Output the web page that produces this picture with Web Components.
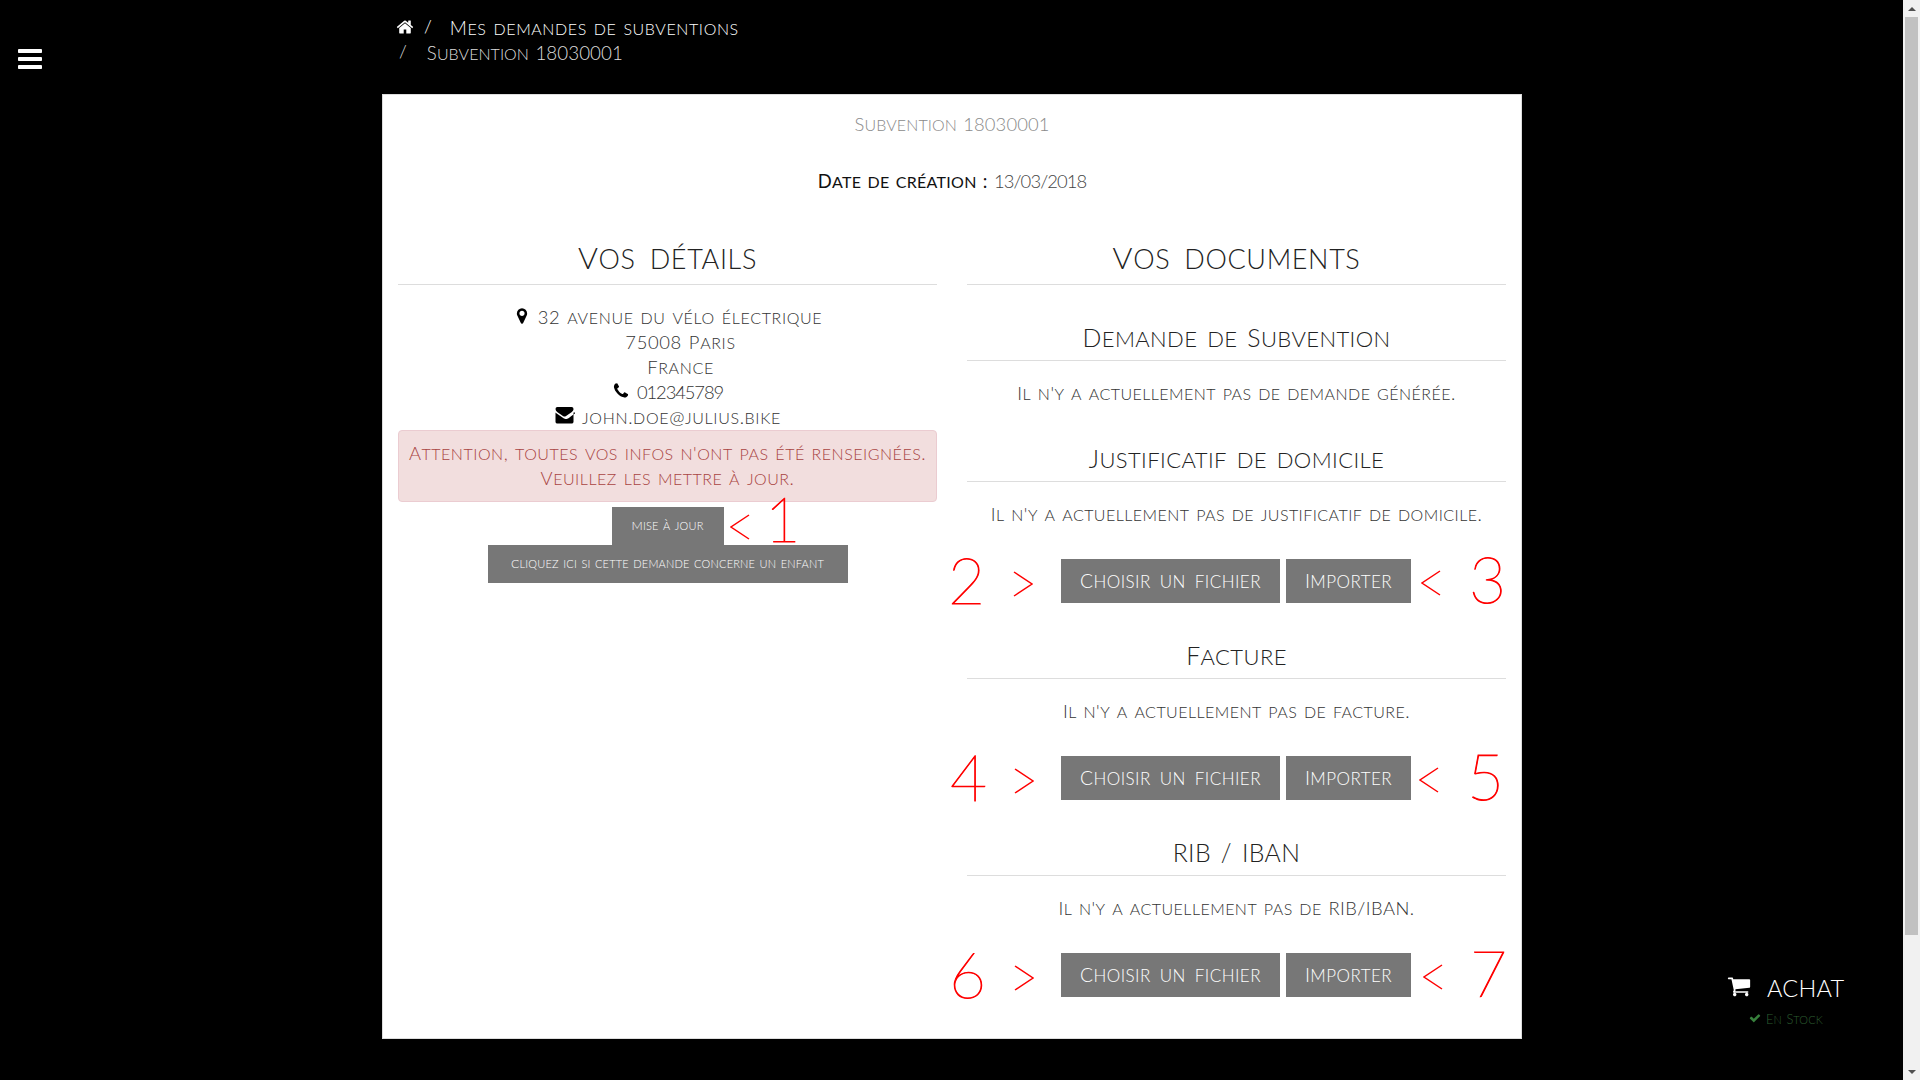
<!DOCTYPE html>
<html lang="fr">
<head>
<meta charset="utf-8">
<title>Subvention 18030001</title>
<style>
html,body{margin:0;padding:0;background:#000;overflow:hidden;height:1080px}
</style>
</head>
<body>
<j-app>
  <j-toggle slot="overlay"></j-toggle>
  <j-buy slot="overlay"></j-buy>
  <j-breadcrumb></j-breadcrumb>
  <j-card>
    <div class="title" slot="title"><j-t>Subvention 18030001</j-t></div>
    <j-date slot="date" label="Date de création :" value="13/03/2018"></j-date>
    <j-column slot="left" heading="Vos détails">
      <j-details></j-details>
    </j-column>
    <j-column slot="right" heading="Vos documents">
      <j-doc heading="Demande de Subvention" text="Il n'y a actuellement pas de demande générée."></j-doc>
      <j-doc heading="Justificatif de domicile" text="Il n'y a actuellement pas de justificatif de domicile." upload="2,3" pos="951,1013,1421,1472"></j-doc>
      <j-doc heading="Facture" text="Il n'y a actuellement pas de facture." upload="4,5" pos="953,1014,1419,1470"></j-doc>
      <j-doc heading="RIB / IBAN" text="Il n'y a actuellement pas de RIB/IBAN." upload="6,7" pos="952,1014,1423,1473"></j-doc>
    </j-column>
  </j-card>
</j-app>
<script>
const ICONS={
 bars:'M1664 1344v128q0 26-19 45t-45 19h-1408q-26 0-45-19t-19-45v-128q0-26 19-45t45-19h1408q26 0 45 19t19 45zm0-512v128q0 26-19 45t-45 19h-1408q-26 0-45-19t-19-45v-128q0-26 19-45t45-19h1408q26 0 45 19t19 45zm0-512v128q0 26-19 45t-45 19h-1408q-26 0-45-19t-19-45v-128q0-26 19-45t45-19h1408q26 0 45 19t19 45z',
 home:'M1472 992v480q0 26-19 45t-45 19h-384v-384h-256v384h-384q-26 0-45-19t-19-45v-480q0-1 .5-3t.5-3l575-474 575 474q1 2 1 6zm223-69l-62 74q-8 9-21 11h-3q-13 0-21-7l-692-577-692 577q-12 8-24 7-13-2-21-11l-62-74q-8-10-7-23.5t11-21.5l719-599q32-26 76-26t76 26l244 204v-195q0-14 9-23t23-9h192q14 0 23 9t9 23v408l219 182q10 8 11 21.5t-7 23.5z',
 marker:'M1152 640q0-106-75-181t-181-75-181 75-75 181 75 181 181 75 181-75 75-181zm256 0q0 109-33 179l-364 774q-16 33-47.5 52t-67.5 19-67.5-19-46.5-52l-365-774q-33-70-33-179 0-212 150-362t362-150 362 150 150 362z',
 phone:'M1600 1240q0 27-10 70.5t-21 68.5q-21 50-122 106-94 51-186 51-27 0-53-3.5t-57.5-12.5-47-14.5-55.5-20.5-49-18q-98-35-175-83-127-79-264-216t-216-264q-48-77-83-175-3-9-18-49t-20.5-55.5-14.5-47-12.5-57.5-3.5-53q0-92 51-186 56-101 106-122 25-11 68.5-21t70.5-10q14 0 21 3 18 6 53 76 11 19 30 54t35 63.5 31 53.5q3 4 17.5 25t21.5 35.5 7 28.5q0 20-28.5 50t-62 55-62 53-28.5 46q0 9 5 22.5t8.5 20.5 14 24 11.5 19q76 137 174 235t235 174q2 1 19 11.5t24 14 20.5 8.5 22.5 5q18 0 46-28.5t53-62 55-62 50-28.5q14 0 28.5 7t35.5 21.5 25 17.5q25 15 53.5 31t63.5 35 54 30q70 35 76 53 3 7 3 21z',
 mail:'M1664 630v794q0 66-47 113t-113 47h-1216q-66 0-113-47t-47-113v-794q44 49 101 87 362 246 497 345 57 42 92.5 65.5t94.5 48 110 24.5h2q51 0 110-24.5t94.5-48 92.5-65.5q170-123 498-345 57-39 100-87zM1664 336q0 79-49 151t-122 123L1030 930Q945 990 896 990Q847 990 762 930L299 610Q128 490 128 336Q128 176 288 176H1504Q1664 176 1664 336z',
 cart:'M704 1536q0 52-38 90t-90 38-90-38-38-90 38-90 90-38 90 38 38 90zm896 0q0 52-38 90t-90 38-90-38-38-90 38-90 90-38 90 38 38 90zm128-1088v512q0 24-16.5 42.5t-40.5 21.5l-1044 122q13 60 13 70 0 16-24 64h920q26 0 45 19t19 45-19 45-45 19h-1024q-26 0-45-19t-19-45q0-11 8-31.5t16-36 21.5-40 15.5-29.5l-177-823h-204q-26 0-45-19t-19-45 19-45 45-19h256q16 0 28.5 6.5t19.5 15.5 13 24.5 8 26 5.5 29.5 4.5 26h1201q26 0 45 19t19 45z',
 check:'M1671 566q0 40-28 68l-724 724-136 136q-28 28-68 28t-68-28l-136-136-362-362q-28-28-28-68t28-68l136-136q28-28 68-28t68 28l294 295 656-657q28-28 68-28t68 28l136 136q28 28 28 68z'
};
const icon=(n,w,h,c='currentColor',extra='')=>`<svg width="${w}" height="${h}" viewBox="0 0 1792 1792" preserveAspectRatio="xMidYMid meet" style="flex:none;${extra}" aria-hidden="true"><path fill="${c}" d="${ICONS[n]}"/></svg>`;
const esc=s=>s.replace(/&/g,'&amp;').replace(/</g,'&lt;');

function make(name,css,html,after){
  customElements.define(name,class extends HTMLElement{
    constructor(){super();this.attachShadow({mode:'open'});}
    connectedCallback(){
      if(this.shadowRoot.firstChild)return;
      const a=n=>this.getAttribute(n)||'';
      this.shadowRoot.innerHTML=`<style>${css}</style>`+html(a);
      if(after)after(this,a);
    }
  });
}

/* Small-caps text: capitals and digits sized down so they stand just above the lowercase. */
customElements.define('j-t',class extends HTMLElement{
  constructor(){super();this.attachShadow({mode:'open'});}
  connectedCallback(){
    if(this.shadowRoot.firstChild)return;
    const s=this.textContent;this.textContent='';
    this.shadowRoot.innerHTML=`<style>:host{display:inline;font-variant-caps:small-caps}.u{font-size:.8em;line-height:0}</style>`+
      esc(s).replace(/[^a-zà-ÿ ]+/g,m=>`<span class="u">${m}</span>`);
  }
});

make('j-app',`
  :host{display:flex;width:1920px;height:1080px;background:#000;color:#333;font-family:Lato,"Open Sans",sans-serif;font-weight:300;overflow:hidden}
  main{flex:1;position:relative;min-width:0;display:flex;flex-direction:column;align-items:center}
  .wrap{width:1140px;margin-left:1px;display:flex;flex-direction:column}
`,()=>`<main><slot name="overlay"></slot><div class="wrap"><slot></slot></div></main><j-scrollbar></j-scrollbar>`);

make('j-scrollbar',`
  :host{display:flex;flex-direction:column;width:17px;height:1080px;background:#f1f1f1;flex:none;position:relative}
  .up,.down{height:17px;display:flex;align-items:center;justify-content:center}
  .up i{border:solid transparent;border-width:0 4px 4px;border-bottom-color:#505050}
  .down i{border:solid transparent;border-width:4px 4px 0;border-top-color:#505050}
  .track{flex:1;padding:0 2px}
  .thumb{height:918px;background:#c1c1c1}
`,()=>`<div class="up"><i></i></div><div class="track"><div class="thumb"></div></div><div class="down"><i></i></div>`);

make('j-toggle',`
  :host{position:absolute;left:16px;top:45px;width:28px;height:28px;display:block;color:#fff}
`,()=>icon('bars',28,28,'#fff','display:block'));

make('j-buy',`
  :host{position:absolute;left:1727px;top:971px;display:block;width:120px;color:#fff}
  .top{display:flex;align-items:center;height:30px}
  .a{font-size:29.5px;margin-left:16px;letter-spacing:.2px;line-height:30px}
  .s{display:flex;align-items:center;margin:10px 0 0 22px;color:#2c5e30;font-size:16px;line-height:14px;letter-spacing:.1px;white-space:nowrap}
  .s svg{margin-right:5px}
`,()=>`<div class="top">${icon('cart',24,24,'#fff')}<span class="a"><j-t>ACHAT</j-t></span></div>
  <div class="s">${icon('check',12,12,'#37803c')}<j-t>En Stock</j-t></div>`);

make('j-breadcrumb',`
  :host{display:block;height:94px;box-sizing:border-box;padding:14px 0 0 14px;color:#fff;font-size:23.5px;line-height:25px;letter-spacing:0;word-spacing:0;white-space:nowrap}
  .l{display:flex;align-items:center;height:25px}
  .sep{font-size:18px;font-weight:300;letter-spacing:0}
  .one .sep{margin:0 0 0 10px}.one .t{margin-left:18px;letter-spacing:.6px}
  .one svg{margin-top:1px}
  .two{color:#ddd}.two .sep{margin-left:3px}.two .t{margin-left:20px;letter-spacing:.05px}
`,()=>`<div class="l one">${icon('home',18,18,'#fff')}<span class="sep">/</span><span class="t"><j-t>Mes demandes de subventions</j-t></span></div>
  <div class="l two"><span class="sep">/</span><span class="t"><j-t>Subvention 18030001</j-t></span></div>`);

make('j-card',`
  :host{display:block;background:#fff;border:1px solid #ddd;border-bottom-color:#ddd;box-sizing:border-box;height:945px;padding:15px 15px 0;text-align:center;font-size:23px;line-height:25px}
  ::slotted(.title){color:#8a8a8a;letter-spacing:.1px;margin-bottom:32px}
  .cols{display:grid;grid-template-columns:539px 539px;column-gap:30px;margin-top:46px}
`,()=>`<slot name="title"></slot><slot name="date"></slot><div class="cols"><slot name="left"></slot><slot name="right"></slot></div>`);

make('j-date',`
  :host{display:block;height:25px;color:#111}
  b{font-weight:400;letter-spacing:.3px}
  span{color:#444;letter-spacing:-.9px}
`,a=>`<b><j-t>${esc(a('label'))}</j-t></b> <span><j-t>${esc(a('value'))}</j-t></span>`);

make('j-column',`
  :host{display:block}
  h2{margin:0;height:33px;padding-bottom:13px;font-size:38px;line-height:33px;font-weight:300;color:#222;letter-spacing:.65px;word-spacing:3px;border-bottom:1px solid #ddd}
`,a=>`<h2><j-t>${esc(a('heading'))}</j-t></h2><slot></slot>`);

make('j-details',`
  :host{display:block;margin-top:18px;color:#333;letter-spacing:.65px}
  .l{height:25px;display:flex;justify-content:center;align-items:center;gap:7px;white-space:nowrap}
  .pad{padding-left:26px}
  .tel{letter-spacing:-1.1px}
  .alert{margin-top:2px;height:72px;box-sizing:border-box;padding:8px 4px;background:#f2dede;border:1px solid #ebccd1;border-radius:4px;color:#a94442;letter-spacing:.52px;white-space:nowrap}
  .acts{position:relative;margin-top:5px;display:flex;flex-direction:column;align-items:center}
`,()=>`<div class="l">${icon('marker',18,18,'#000')}<j-t>32 avenue du vélo électrique</j-t></div>
  <div class="l pad"><j-t>75008 Paris</j-t></div>
  <div class="l pad"><j-t>France</j-t></div>
  <div class="l tel">${icon('phone',18,18,'#000')}<j-t>012345789</j-t></div>
  <div class="l">${icon('mail',21,21,'#000')}<j-t>john.doe@julius.bike</j-t></div>
  <div class="alert"><j-t>Attention, toutes vos infos n'ont pas été renseignées.</j-t><br><j-t>Veuillez les mettre à jour.</j-t></div>
  <div class="acts">
    <j-btn small w="112" label="Mise à jour"></j-btn>
    <j-btn small w="360" label="Cliquez ici si cette demande concerne un enfant"></j-btn>
    <j-chevron x="332" y="7" dir="left"></j-chevron>
    <j-note x="367" y="-19" size="61">1</j-note>
  </div>`);

make('j-btn',`
  :host{display:block;flex:none}
  div{display:flex;align-items:center;justify-content:center;height:44px;box-sizing:border-box;padding:0 0 5px;background:#777;color:#fff;font-size:24px;letter-spacing:.45px;word-spacing:2px;white-space:nowrap}
  :host([small]) div{height:38px;padding-bottom:4px;font-size:15.5px;letter-spacing:.2px;word-spacing:0}
`,a=>`<div style="width:${a('w')}px"><j-t>${esc(a('label'))}</j-t></div>`);

make('j-doc',`
  :host{display:block;margin-top:36px;text-align:center}
  h3{margin:0;height:29px;padding-bottom:10px;font-size:31px;line-height:29px;font-weight:300;color:#222;letter-spacing:.4px;word-spacing:1px;border-bottom:1px solid #ddd}
  p{margin:18px 0 0;height:25px;padding-bottom:2px;line-height:25px;color:#333;letter-spacing:.45px}
  .row{position:relative;margin-top:32px;height:44px;display:flex;justify-content:center;gap:6px;padding-right:1px}
`,a=>{
  let up='';
  if(a('upload')){
    const [n1,n2]=a('upload').split(',');
    const [d1,c1,c2,d2]=a('pos').split(',').map(v=>v-967);
    up=`<div class="row">
      <j-btn label="Choisir un fichier" w="219"></j-btn><j-btn label="Importer" w="125"></j-btn>
      <j-note x="${d1-3}" y="-11" size="64">${n1}</j-note>
      <j-chevron x="${c1}" y="12" dir="right"></j-chevron>
      <j-chevron x="${c2}" y="11" dir="left"></j-chevron>
      <j-note x="${d2-3}" y="-12" size="64">${n2}</j-note>
    </div>`;
  }
  return `<h3><j-t>${esc(a('heading'))}</j-t></h3><p><j-t>${esc(a('text'))}</j-t></p>${up}`;
});

/* Hand-added red annotations that sit over the page. */
make('j-note',`
  :host{position:absolute;display:block;color:#f00;font-family:Lato,sans-serif;font-weight:100;-webkit-text-stroke:.9px #f00;line-height:.72;letter-spacing:0;word-spacing:0}
`,()=>`<slot></slot>`,(el,a)=>{
  const s=+a('size');
  el.style.left=a('x')+'px';el.style.top=(+a('y')+s*.14)+'px';el.style.fontSize=s+'px';
});
make('j-chevron',`
  :host{position:absolute;display:block;width:20px;height:26px}
  svg{display:block}
`,a=>`<svg width="20" height="26" viewBox="0 0 20 26" aria-hidden="true"><polyline points="${a('dir')==='left'?'19,1 1,13 19,25':'1,1 19,13 1,25'}" fill="none" stroke="#f00" stroke-width="1.5"/></svg>`,
(el,a)=>{el.style.left=a('x')+'px';el.style.top=a('y')+'px';});
</script>
</body>
</html>
